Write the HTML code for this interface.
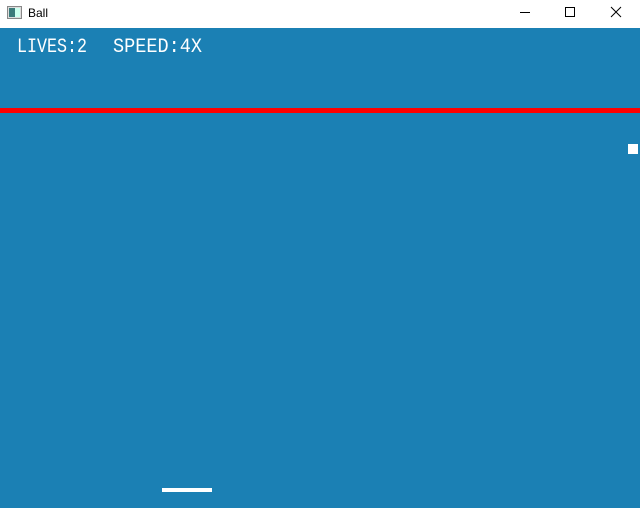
<!DOCTYPE html>
<html><head><style>
html,body{margin:0;padding:0;width:640px;height:508px;overflow:hidden;background:#1b80b4;font-family:"Liberation Sans",sans-serif}
.tb{position:absolute;left:0;top:0;width:640px;height:28px;background:#fff}
.abs{position:absolute}
</style></head><body>
<div class="tb">
<svg class="abs" style="left:7px;top:6px" width="16" height="14" viewBox="0 0 16 14">
<rect x="0.5" y="0.5" width="14" height="12" fill="#ddd" stroke="#888"/>
<rect x="2" y="2" width="6" height="9" fill="#3a7a7a"/>
<rect x="8" y="2" width="5" height="9" fill="#cfe"/>
</svg>
<div class="abs" style="left:28px;top:6px;font-size:12px;color:#000">Ball</div>
<svg class="abs" style="left:500px;top:0" width="140" height="28" viewBox="0 0 140 28">
<line x1="20" y1="12.5" x2="30" y2="12.5" stroke="#000" stroke-width="1"/>
<rect x="65.5" y="7.5" width="9" height="9" fill="none" stroke="#000" stroke-width="1"/>
<path d="M111 7L121 17M121 7L111 17" stroke="#000" stroke-width="1"/>
</svg>
</div>
<svg class="abs" style="left:0;top:28px" width="640" height="480">
<text x="17" y="24" font-family="Liberation Mono, monospace" font-size="20" fill="#fff" textLength="70" lengthAdjust="spacingAndGlyphs">LIVES:2</text>
<text x="113" y="24" font-family="Liberation Mono, monospace" font-size="20" fill="#fff" textLength="89" lengthAdjust="spacingAndGlyphs">SPEED:4X</text>
<rect x="0" y="80" width="640" height="5" fill="#ff0000"/>
<rect x="628" y="116" width="10" height="10" fill="#fff"/>
<rect x="162" y="460" width="50" height="4" fill="#fff"/>
</svg>
</body></html>
